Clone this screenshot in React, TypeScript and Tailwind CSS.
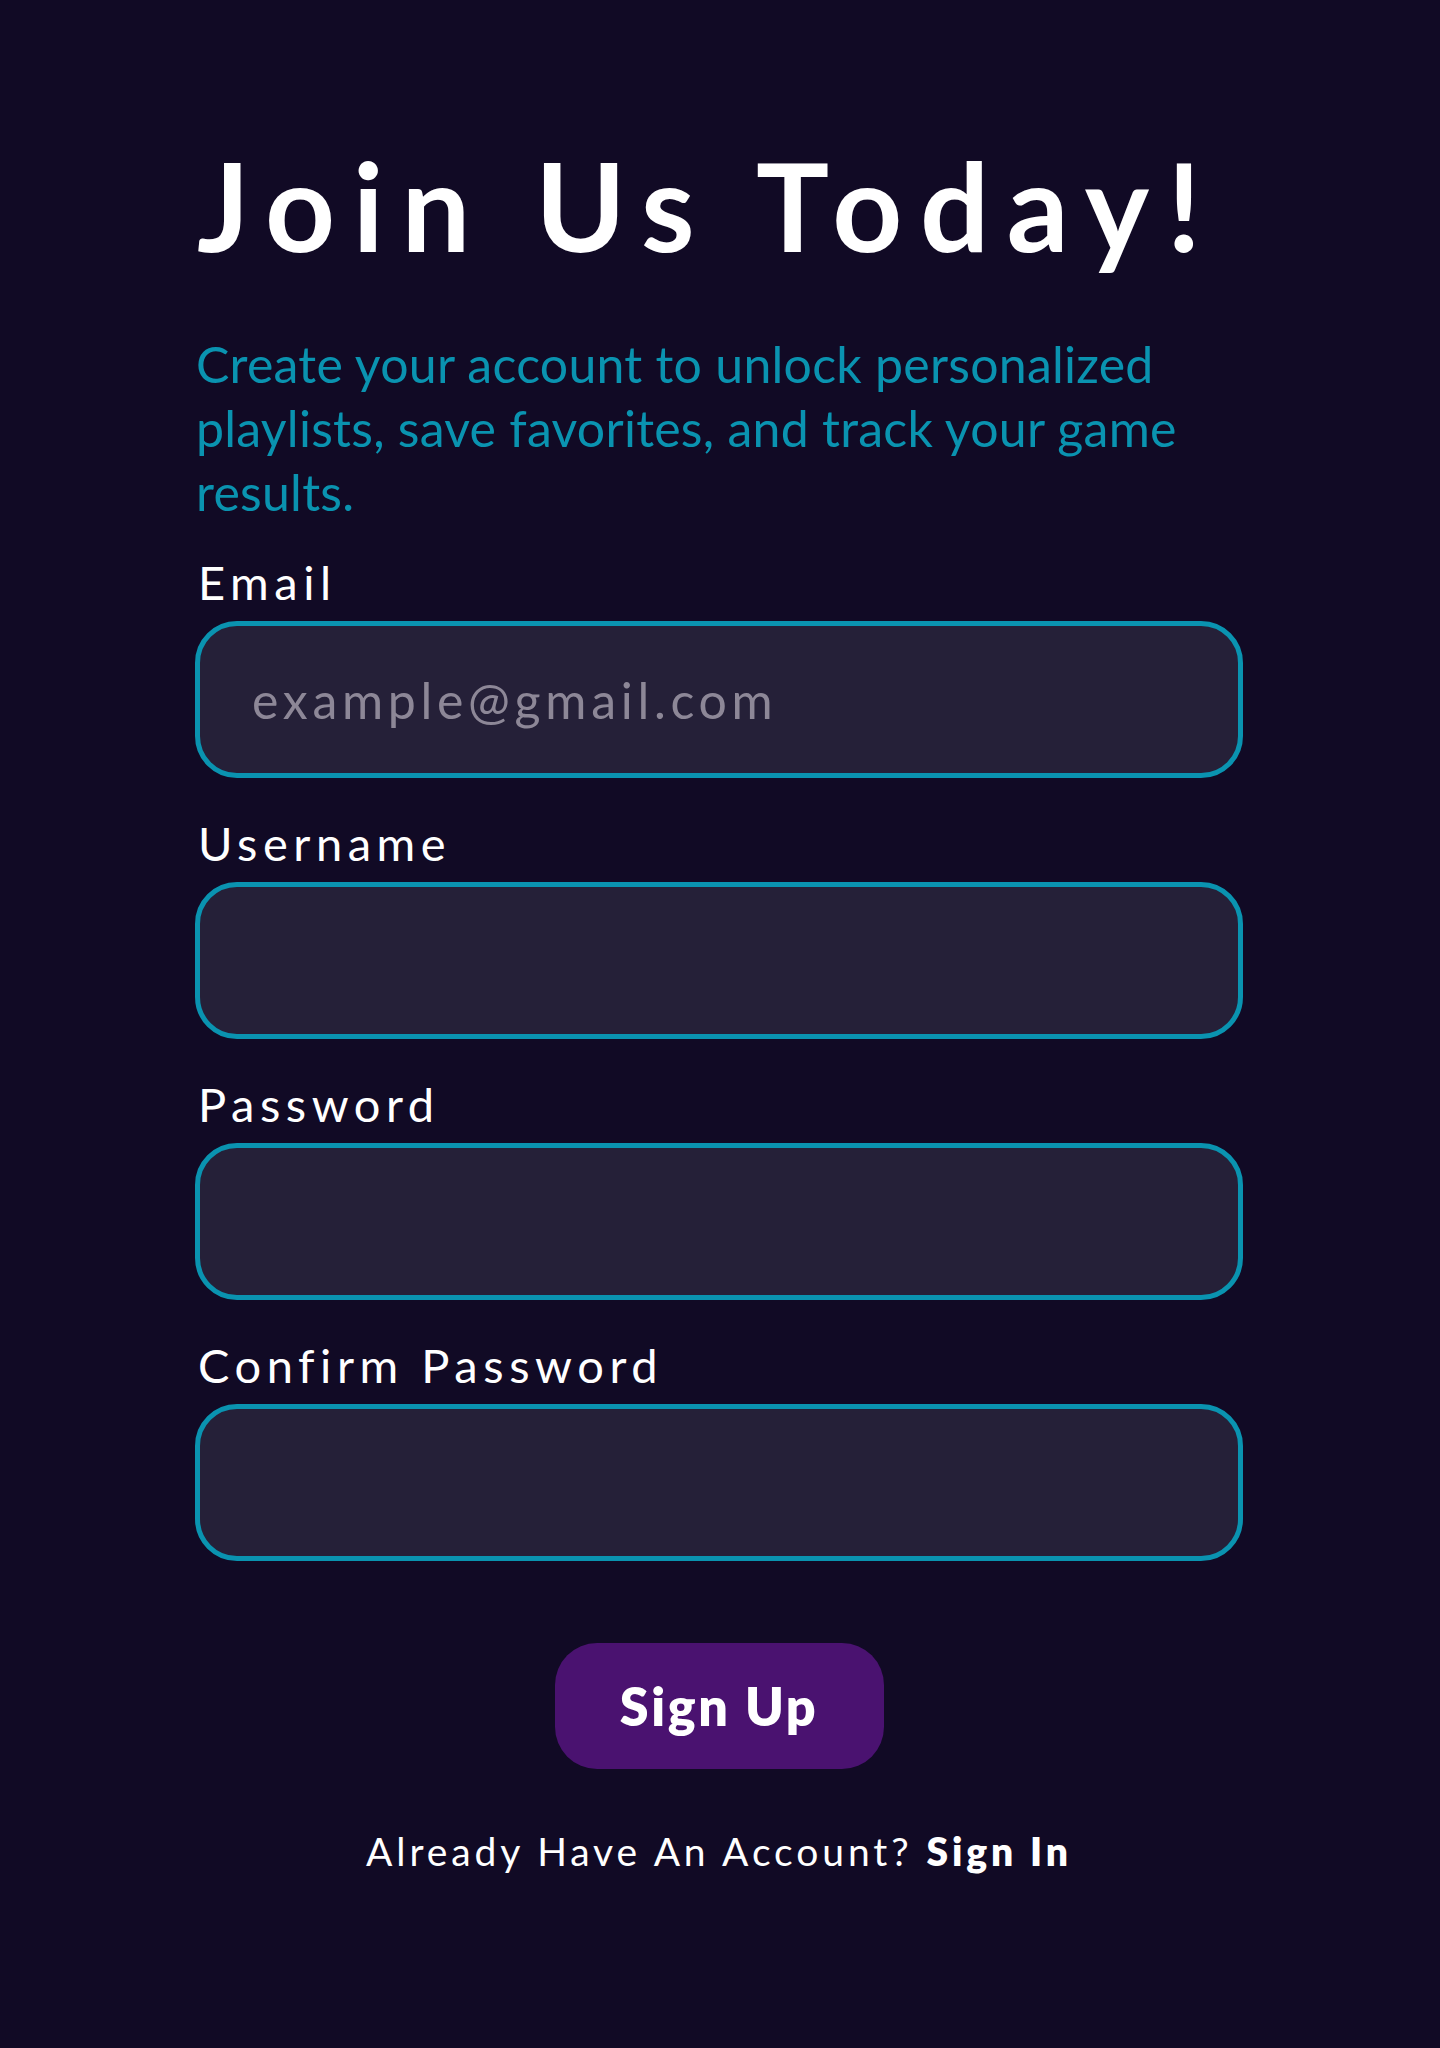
import React from "react";

const font = { fontFamily: '"Lato", "Open Sans", sans-serif' };

function Field({ label, placeholder, type = "text" }: { label: string; placeholder?: string; type?: string }) {
  return (
    <div className="flex flex-col">
      <label className="text-[47px] leading-[56px] tracking-[0.118em] text-white font-normal pl-[3px] mb-[11px]">{label}</label>
      <input
        type={type}
        placeholder={placeholder}
        className="h-[157px] w-full rounded-[42px] border-[5px] border-[#0a93b0] bg-[#252038] px-[52px] text-[50px] tracking-[0.094em] text-white placeholder:text-[#8d8797] outline-none"
        style={font}
      />
    </div>
  );
}

export default function App() {
  return (
    <div className="min-h-[2048px] w-full bg-[#110a25] pl-[195px]" style={font}>
      <div className="w-[1048px] pt-[140px]">
        <h1 className="pl-[2px] text-[122px] leading-[130px] font-bold tracking-[0.145em] text-white whitespace-nowrap">Join Us Today!</h1>
        <p className="mt-[62px] pl-[1px] text-[50px] leading-[64px] tracking-[0.005em] text-[#0a93b0]">
          Create your account to unlock personalized playlists, save favorites, and track your game results.
        </p>
        <div className="mt-[30px] flex flex-col gap-[37px]">
          <Field label="Email" placeholder="example@gmail.com" />
          <Field label="Username" />
          <Field label="Password" type="password" />
          <Field label="Confirm Password" type="password" />
        </div>
        <div className="mt-[82px] flex justify-center">
          <button className="h-[126px] w-[329px] rounded-[42px] bg-[#4a1270] text-[52px] font-extrabold tracking-[0.05em] text-white">Sign Up</button>
        </div>
        <p className="mt-[58px] text-center text-[39px] leading-[48px] tracking-[0.1em] text-white">
          Already Have An Account? <span className="font-extrabold">Sign In</span>
        </p>
      </div>
    </div>
  );
}
